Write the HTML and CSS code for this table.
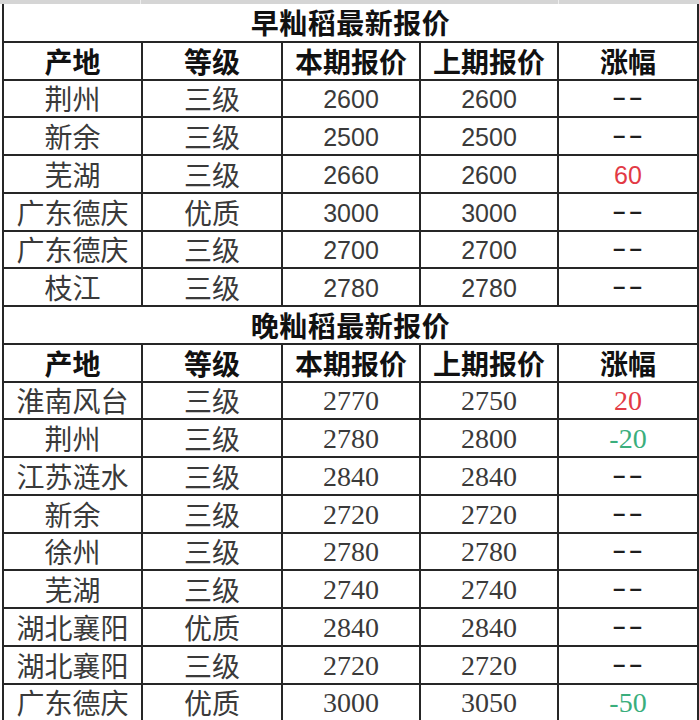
FILE: index.html
```html
<!DOCTYPE html>
<html lang="zh-CN">
<head>
<meta charset="utf-8">
<title>早籼稻最新报价</title>
<link rel="stylesheet" href="styles.css">
</head>
<body>
<div class="colbar">
  <div class="seg seg-a"></div>
  <div class="seg seg-b"></div>
  <div class="seg seg-c"></div>
</div>
<table class="sheet">
  <colgroup>
    <col class="c1"><col class="c2"><col class="c3"><col class="c4"><col class="c5">
  </colgroup>
  <tbody>
    <tr class="title-row"><td colspan="5" class="title">早籼稻最新报价</td></tr>
    <tr class="head-row"><th>产地</th><th>等级</th><th>本期报价</th><th>上期报价</th><th>涨幅</th></tr>
    <tr><td>荆州</td><td>三级</td><td class="num">2600</td><td class="num">2600</td><td class="dash"><span class="dd">--</span></td></tr>
    <tr><td>新余</td><td>三级</td><td class="num">2500</td><td class="num">2500</td><td class="dash"><span class="dd">--</span></td></tr>
    <tr><td>芜湖</td><td>三级</td><td class="num">2660</td><td class="num">2600</td><td class="num up">60</td></tr>
    <tr><td>广东德庆</td><td>优质</td><td class="num">3000</td><td class="num">3000</td><td class="dash"><span class="dd">--</span></td></tr>
    <tr><td>广东德庆</td><td>三级</td><td class="num">2700</td><td class="num">2700</td><td class="dash"><span class="dd">--</span></td></tr>
    <tr><td>枝江</td><td>三级</td><td class="num">2780</td><td class="num">2780</td><td class="dash"><span class="dd">--</span></td></tr>
    <tr class="title-row"><td colspan="5" class="title">晚籼稻最新报价</td></tr>
    <tr class="head-row"><th>产地</th><th>等级</th><th>本期报价</th><th>上期报价</th><th>涨幅</th></tr>
    <tr><td>淮南风台</td><td>三级</td><td class="num serif">2770</td><td class="num serif">2750</td><td class="num serif up">20</td></tr>
    <tr><td>荆州</td><td>三级</td><td class="num serif">2780</td><td class="num serif">2800</td><td class="num serif down">-20</td></tr>
    <tr><td>江苏涟水</td><td>三级</td><td class="num serif">2840</td><td class="num serif">2840</td><td class="dash"><span class="dd">--</span></td></tr>
    <tr><td>新余</td><td>三级</td><td class="num serif">2720</td><td class="num serif">2720</td><td class="dash"><span class="dd">--</span></td></tr>
    <tr><td>徐州</td><td>三级</td><td class="num serif">2780</td><td class="num serif">2780</td><td class="dash"><span class="dd">--</span></td></tr>
    <tr><td>芜湖</td><td>三级</td><td class="num serif">2740</td><td class="num serif">2740</td><td class="dash"><span class="dd">--</span></td></tr>
    <tr><td>湖北襄阳</td><td>优质</td><td class="num serif">2840</td><td class="num serif">2840</td><td class="dash"><span class="dd">--</span></td></tr>
    <tr><td>湖北襄阳</td><td>三级</td><td class="num serif">2720</td><td class="num serif">2720</td><td class="dash"><span class="dd">--</span></td></tr>
    <tr><td>广东德庆</td><td>优质</td><td class="num serif">3000</td><td class="num serif">3050</td><td class="num serif down">-50</td></tr>
  </tbody>
</table>
</body>
</html>
```

FILE: styles.css
```css
html, body {
  margin: 0;
  padding: 0;
  background: #ffffff;
  overflow: hidden;
}

body {
  width: 699px;
  height: 720px;
  font-family: "Noto Sans CJK SC", "Noto Sans", sans-serif;
}

.colbar {
  display: flex;
  height: 4px;
  background: #d5d5d5;
}

.seg {
  height: 100%;
  border-right: 1px solid #eeeeee;
  box-sizing: border-box;
}

.seg-a { width: 141px; }
.seg-b { width: 418px; }
.seg-c { flex: 1; border-right: none; }

.sheet {
  border-collapse: collapse;
  table-layout: fixed;
  width: 695px;
  margin-left: 2px;
}

.c1 { width: 139px; }
.c2 { width: 140px; }
.c3 { width: 138px; }
.c4 { width: 138px; }
.c5 { width: 140px; }

.sheet tr {
  height: 37.75px;
}

.sheet td,
.sheet th {
  border: 2px solid #262626;
  padding: 0;
  text-align: center;
  vertical-align: middle;
  font-size: 28px;
  line-height: 32px;
  white-space: nowrap;
}

.sheet td {
  color: #3a3a3a;
  font-weight: 400;
}

.sheet th {
  color: #111111;
  font-weight: 700;
}

.sheet .title {
  color: #111111;
  font-weight: 700;
  letter-spacing: 0.5px;
}

.sheet tr:first-child td {
  border-top: none;
}

.sheet .num {
  font-family: "Liberation Sans", Arial, sans-serif;
  font-size: 25px;
  padding-top: 2px;
}

.sheet .num.serif {
  font-family: "Liberation Serif", "Times New Roman", serif;
  font-size: 28px;
}

.sheet .dash {
  font-family: "Liberation Sans", Arial, sans-serif;
  font-size: 28px;
  color: #1e1e1e;
}

.dd {
  display: inline-block;
  letter-spacing: 1px;
  transform: scaleX(1.6);
  position: relative;
  top: -1px;
}

.sheet .up {
  color: #e23a45;
}

.sheet .down {
  color: #3aae7c;
}
```
